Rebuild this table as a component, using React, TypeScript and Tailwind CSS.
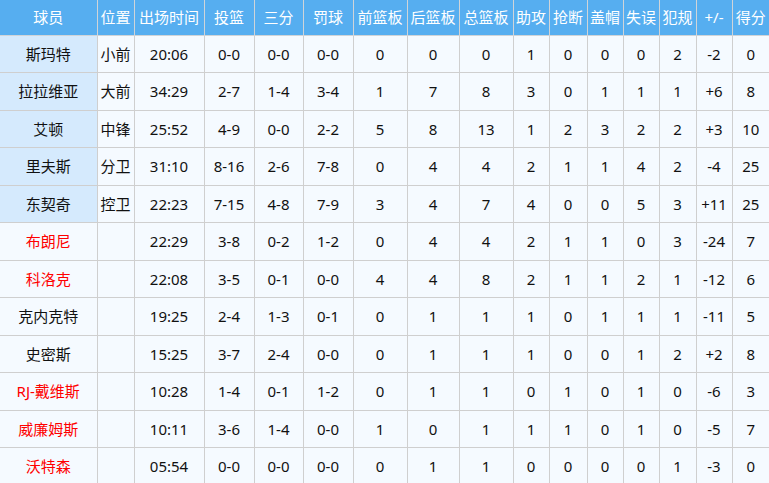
// 球员数据统计表
const cols = [97, 37, 70, 50, 49, 50, 54, 52, 54, 36, 38, 36, 36, 37, 36, 37]

const headers = ['球员', '位置', '出场时间', '投篮', '三分', '罚球', '前篮板', '后篮板', '总篮板', '助攻', '抢断', '盖帽', '失误', '犯规', '+/-', '得分']

type Row = { name: string; pos: string; red?: boolean; stats: string[] }

const rows: Row[] = [
  { name: '斯玛特', pos: '小前', stats: ['20:06', '0-0', '0-0', '0-0', '0', '0', '0', '1', '0', '0', '0', '2', '-2', '0'] },
  { name: '拉拉维亚', pos: '大前', stats: ['34:29', '2-7', '1-4', '3-4', '1', '7', '8', '3', '0', '1', '1', '1', '+6', '8'] },
  { name: '艾顿', pos: '中锋', stats: ['25:52', '4-9', '0-0', '2-2', '5', '8', '13', '1', '2', '3', '2', '2', '+3', '10'] },
  { name: '里夫斯', pos: '分卫', stats: ['31:10', '8-16', '2-6', '7-8', '0', '4', '4', '2', '1', '1', '4', '2', '-4', '25'] },
  { name: '东契奇', pos: '控卫', stats: ['22:23', '7-15', '4-8', '7-9', '3', '4', '7', '4', '0', '0', '5', '3', '+11', '25'] },
  { name: '布朗尼', pos: '', red: true, stats: ['22:29', '3-8', '0-2', '1-2', '0', '4', '4', '2', '1', '1', '0', '3', '-24', '7'] },
  { name: '科洛克', pos: '', red: true, stats: ['22:08', '3-5', '0-1', '0-0', '4', '4', '8', '2', '1', '1', '2', '1', '-12', '6'] },
  { name: '克内克特', pos: '', stats: ['19:25', '2-4', '1-3', '0-1', '0', '1', '1', '1', '0', '1', '1', '1', '-11', '5'] },
  { name: '史密斯', pos: '', stats: ['15:25', '3-7', '2-4', '0-0', '0', '1', '1', '1', '0', '0', '1', '2', '+2', '8'] },
  { name: 'RJ-戴维斯', pos: '', red: true, stats: ['10:28', '1-4', '0-1', '1-2', '0', '1', '1', '0', '1', '0', '1', '0', '-6', '3'] },
  { name: '威廉姆斯', pos: '', red: true, stats: ['10:11', '3-6', '1-4', '0-0', '1', '0', '1', '1', '1', '0', '1', '0', '-5', '7'] },
  { name: '沃特森', pos: '', red: true, stats: ['05:54', '0-0', '0-0', '0-0', '0', '1', '1', '0', '0', '0', '0', '1', '-3', '0'] },
]

export default function App() {
  return (
    <div
      className="w-[769px] h-[483px] overflow-hidden bg-[#f5faff]"
      style={{ fontFamily: '"Noto Sans", "Noto Sans CJK SC", sans-serif' }}
    >
      <table className="w-[769px] table-fixed border-collapse text-[15px] text-[#111]">
        <colgroup>
          {cols.map((w, i) => (
            <col key={i} style={{ width: w }} />
          ))}
        </colgroup>
        <thead>
          <tr className="h-[35px] bg-[#56aef0] text-white">
            {headers.map((h) => (
              <th key={h} className="border border-t-0 border-[#d0d4d8] first:border-l-0 last:border-r-0 p-0 text-center font-normal whitespace-nowrap">
                {h}
              </th>
            ))}
          </tr>
        </thead>
        <tbody>
          {rows.map((r, i) => {
            const starter = i < 5
            return (
              <tr key={r.name} className="h-[37.5px]">
                <td
                  className={`border border-l-0 border-[#cfcfcf] p-0 text-center whitespace-nowrap ${starter ? 'bg-[#d5eafd]' : 'bg-[#f5faff]'} ${r.red ? 'text-[#ff0000]' : ''}`}
                >
                  {r.name}
                </td>
                <td className="border border-[#cfcfcf] p-0 text-center whitespace-nowrap">{r.pos}</td>
                {r.stats.map((s, j) => (
                  <td key={j} className="border border-[#cfcfcf] last:border-r-0 p-0 text-center whitespace-nowrap">
                    {s}
                  </td>
                ))}
              </tr>
            )
          })}
        </tbody>
      </table>
    </div>
  )
}
